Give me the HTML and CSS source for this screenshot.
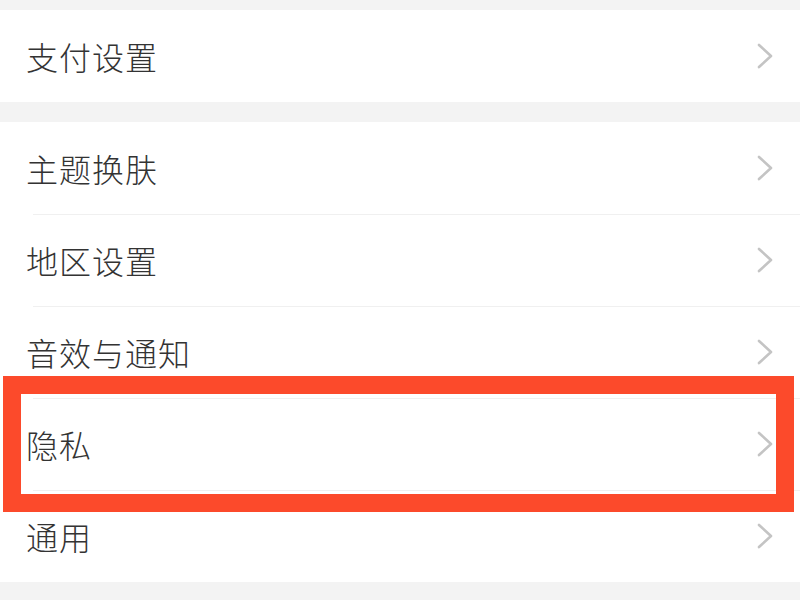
FILE: index.html
```html
<!DOCTYPE html>
<html>
  <head>
    <meta charset="utf-8">
    <title>设置</title>
    <link rel="stylesheet" href="styles.css">
  </head>
  <body>
    <div class="group">
      <div class="row">
        <span class="label">支付设置</span>
        <svg class="chevron" width="16" height="26" viewBox="0 0 16 26"><polyline points="2,2 14,13 2,24"/></svg>
      </div>
    </div>

    <div class="group">
      <div class="row">
        <span class="label">主题换肤</span>
        <svg class="chevron" width="16" height="26" viewBox="0 0 16 26"><polyline points="2,2 14,13 2,24"/></svg>
      </div>
      <div class="row">
        <span class="label">地区设置</span>
        <svg class="chevron" width="16" height="26" viewBox="0 0 16 26"><polyline points="2,2 14,13 2,24"/></svg>
      </div>
      <div class="row">
        <span class="label">音效与通知</span>
        <svg class="chevron" width="16" height="26" viewBox="0 0 16 26"><polyline points="2,2 14,13 2,24"/></svg>
      </div>
      <div class="row">
        <span class="label">隐私</span>
        <svg class="chevron" width="16" height="26" viewBox="0 0 16 26"><polyline points="2,2 14,13 2,24"/></svg>
      </div>
      <div class="row">
        <span class="label">通用</span>
        <svg class="chevron" width="16" height="26" viewBox="0 0 16 26"><polyline points="2,2 14,13 2,24"/></svg>
      </div>

      <div class="highlight"></div>
    </div>
  </body>
</html>
```

FILE: styles.css
```css
body {
  margin: 0;
  padding-top: 10px;
  background-color: #f3f3f3;
  font-family: "Noto Sans CJK SC", "Noto Sans", sans-serif;
}

.group {
  position: relative;
  background-color: #ffffff;
  margin-bottom: 20px;
}

.row {
  height: 92px;
  display: flex;
  align-items: center;
  justify-content: space-between;
  padding: 0 27px 0 26px;
}

.row + .row {
  background: linear-gradient(#f0f0f0, #f0f0f0) 33px 0 / 100% 1px no-repeat;
}

.label {
  font-size: 32px;
  font-weight: 300;
  letter-spacing: 1px;
  color: #333333;
  line-height: 1;
}

.chevron polyline {
  fill: none;
  stroke: #c4c4c4;
  stroke-width: 2.6;
  stroke-linecap: round;
  stroke-linejoin: round;
}

/* annotation box drawn over the 隐私 row */
.highlight {
  position: absolute;
  top: 254px;
  left: 3px;
  width: 791px;
  height: 136px;
  box-sizing: border-box;
  border: 18px solid #fc4a2b;
}
```
